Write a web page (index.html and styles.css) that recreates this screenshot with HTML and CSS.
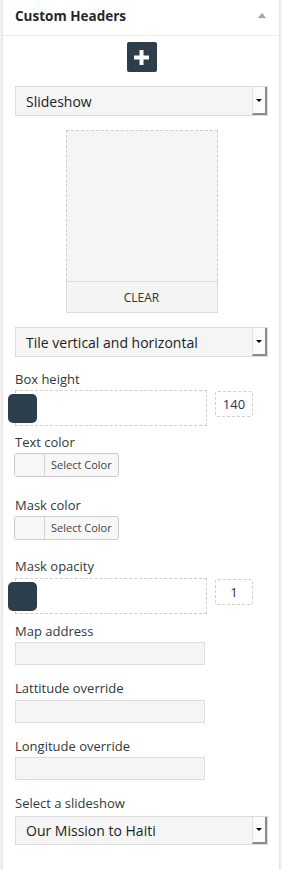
FILE: index.html
```html
<!DOCTYPE html>
<html>
<head>
<meta charset="utf-8">
<link rel="stylesheet" href="styles.css">
</head>
<body>
<div class="panel">
  <div class="head">
    <span class="title">Custom Headers</span>
    <span class="toggle"></span>
  </div>
  <div class="body">
    <div class="add">
      <svg width="15" height="15" viewBox="0 0 15 15"><rect x="5.5" y="0" width="4" height="15" fill="#fff"/><rect x="0" y="5.5" width="15" height="4" fill="#fff"/></svg>
    </div>
    <div class="select s-first"><span class="val">Slideshow</span><span class="arrow"><i class="tri"></i></span></div>
    <div class="image">
      <div class="drop"></div>
      <div class="clear">CLEAR</div>
    </div>
    <div class="select s-tile"><span class="val">Tile vertical and horizontal</span><span class="arrow"><i class="tri"></i></span></div>

    <div class="lbl m13">Box height</div>
    <div class="slider-row m2">
      <div class="track"><span class="handle"></span></div>
      <div class="num">140</div>
    </div>

    <div class="lbl m7">Text color</div>
    <div class="colorbtn m2"><span class="swatch"></span><span class="ctext">Select Color</span></div>

    <div class="lbl m19">Mask color</div>
    <div class="colorbtn m2"><span class="swatch"></span><span class="ctext">Select Color</span></div>

    <div class="lbl m17">Mask opacity</div>
    <div class="slider-row m3">
      <div class="track"><span class="handle"></span></div>
      <div class="num">1</div>
    </div>

    <div class="lbl m8">Map address</div>
    <div class="input m2"></div>

    <div class="lbl m14">Lattitude override</div>
    <div class="input m3"></div>

    <div class="lbl m14">Longitude override</div>
    <div class="input m2"></div>

    <div class="lbl m14">Select a slideshow</div>
    <div class="select s-show m4"><span class="val">Our Mission to Haiti</span><span class="arrow"><i class="tri"></i></span></div>
  </div>
</div>
</body>
</html>
```
FILE: styles.css
```css
* { box-sizing: border-box; }
html, body { margin: 0; padding: 0; }
body {
  background: #f1f1f1;
  font-family: "Open Sans", "Noto Sans", sans-serif;
  color: #32373c;
  width: 282px;
  height: 870px;
  overflow: hidden;
}
.panel {
  margin-left: 2px;
  width: 278px;
  height: 900px;
  background: #fff;
  border-left: 1px solid #e5e5e5;
  border-right: 1px solid #e5e5e5;
}
.head {
  display: flex;
  align-items: center;
  justify-content: space-between;
  height: 36px;
  padding: 7px 13px 9px 12px;
  border-bottom: 1px solid #eee;
}
.title {
  font-size: 13.5px;
  font-weight: 700;
  line-height: 19px;
  color: #23282d;
}
.toggle {
  width: 0;
  height: 0;
  border-left: 4px solid transparent;
  border-right: 4px solid transparent;
  border-bottom: 5px solid #a0a5aa;
  margin-top: -2px;
}
.body {
  padding: 0 11px 0 12px;
}
.add {
  width: 30px;
  height: 30px;
  margin: 6px auto 0;
  background: #2c3e4b;
  border-radius: 2px;
  display: flex;
  align-items: center;
  justify-content: center;
}
.select {
  position: relative;
  height: 30px;
  border: 1px solid #dcdcdc;
  background: #f5f5f5;
  display: flex;
  align-items: center;
  padding-left: 10px;
  font-size: 14px;
  color: #222;
}
.s-first { margin-top: 14px; }
.s-tile { margin-top: 14px; }
.s-show { height: 29px; }
.select .arrow {
  position: absolute;
  right: 0;
  top: 0;
  bottom: 0;
  width: 15px;
  background: #fbfbfb;
  border-left: 1px solid #e2e2e2;
  border-right: 2px solid #8a8a8a;
  border-bottom: 2px solid #8a8a8a;
  display: flex;
  align-items: center;
  justify-content: center;
}
.tri {
  width: 0;
  height: 0;
  border-left: 3px solid transparent;
  border-right: 3px solid transparent;
  border-top: 3px solid #000;
}
.image {
  width: 152px;
  margin: 14px auto 0;
}
.drop {
  height: 151px;
  border: 1px dashed #cfcfcf;
  border-bottom: none;
  background: #f5f5f5;
}
.clear {
  height: 32px;
  border: 1px solid #dcdcdc;
  background: #f4f4f4;
  font-size: 12px;
  color: #333;
  display: flex;
  align-items: center;
  justify-content: center;
}
.lbl {
  font-size: 13px;
  line-height: 18px;
  color: #32373c;
}
.m2 { margin-top: 2px; }
.m3 { margin-top: 3px; }
.m4 { margin-top: 4px; }
.m7 { margin-top: 7px; }
.m8 { margin-top: 8px; }
.m13 { margin-top: 13px; }
.m14 { margin-top: 14px; }
.m17 { margin-top: 17px; }
.m19 { margin-top: 19px; }
.slider-row {
  display: flex;
  align-items: flex-start;
}
.track {
  position: relative;
  width: 192px;
  height: 36px;
  border: 1px dashed #cfcfcf;
}
.handle {
  position: absolute;
  left: -8px;
  top: 3px;
  width: 29px;
  height: 29px;
  background: #2c3e4b;
  border-radius: 5px;
}
.num {
  margin-left: 8px;
  margin-top: 1px;
  width: 38px;
  height: 26px;
  border: 1px dashed #cfcfcf;
  border-radius: 3px;
  font-size: 13px;
  line-height: 24px;
  text-align: center;
  color: #1f3550;
}
.colorbtn {
  margin-left: -1px;
  width: 105px;
  height: 24px;
  border: 1px solid #cccccc;
  border-radius: 3px;
  background: #f7f7f7;
  display: flex;
  align-items: stretch;
}
.swatch {
  width: 30px;
  border-right: 1px solid #d5d5d5;
  background: #f7f7f7;
  border-radius: 3px 0 0 3px;
}
.ctext {
  padding-left: 6px;
  font-size: 11px;
  line-height: 22px;
  color: #444;
}
.input {
  width: 190px;
  height: 23px;
  border: 1px solid #dddddd;
  background: #f5f5f5;
}
```
